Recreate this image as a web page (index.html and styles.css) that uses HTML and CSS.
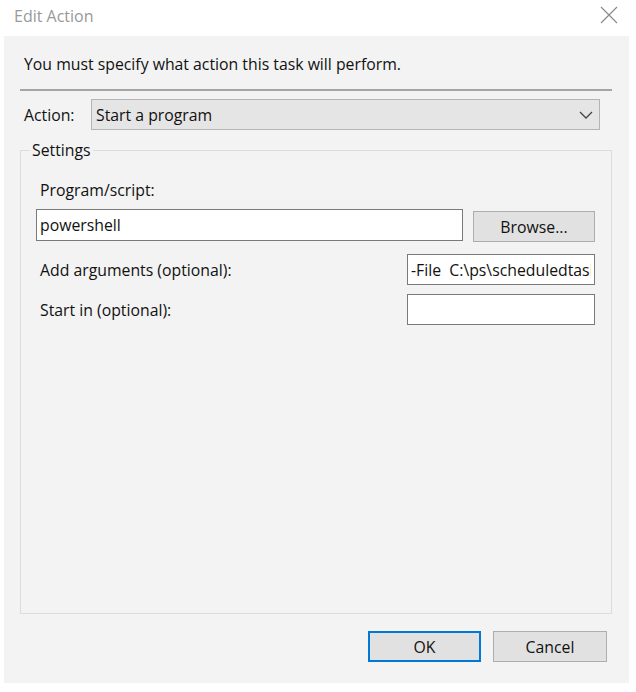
FILE: index.html
```html
<!DOCTYPE html>
<html>
<head>
<meta charset="utf-8">
<link rel="stylesheet" href="styles.css">
</head>
<body>
<div class="window">
  <div class="titlebar">
    <span class="title">Edit Action</span>
    <svg class="close" width="18" height="18" viewBox="0 0 18 18"><path d="M1 1 L17 17 M17 1 L1 17" stroke="#8a8a8a" stroke-width="1.2" fill="none"/></svg>
  </div>
  <div class="body">
    <div class="intro">You must specify what action this task will perform.</div>
    <div class="sep"></div>
    <div class="action-row">
      <span class="lbl">Action:</span>
      <div class="select"><span>Start a program</span>
        <svg width="14" height="8" viewBox="0 0 14 8"><path d="M1 1 L7 7 L13 1" stroke="#444" stroke-width="1.3" fill="none"/></svg>
      </div>
    </div>
    <fieldset class="settings">
      <legend>Settings</legend>
      <div class="lbl prog-lbl">Program/script:</div>
      <div class="prog-row">
        <div class="input wide">powershell</div>
        <div class="btn browse">Browse...</div>
      </div>
      <div class="field-row args">
        <span class="lbl">Add arguments (optional):</span>
        <div class="input small"><span class="clip">-File&nbsp; C:\ps\scheduledtasks.ps1</span></div>
      </div>
      <div class="field-row start">
        <span class="lbl">Start in (optional):</span>
        <div class="input small"></div>
      </div>
    </fieldset>
    <div class="buttons">
      <div class="btn ok">OK</div>
      <div class="btn cancel">Cancel</div>
    </div>
  </div>
</div>
</body>
</html>
```
FILE: styles.css
```css
html, body { margin: 0; padding: 0; background: #fff; }
body { width: 636px; height: 692px; overflow: hidden; font-family: "Open Sans", "Noto Sans", sans-serif; font-size: 15.8px; color: #111; }
.window { width: 636px; height: 692px; display: flex; flex-direction: column; }
.titlebar { height: 36px; display: flex; align-items: center; justify-content: space-between; padding: 0 18px 0 14px; box-sizing: border-box; }
.title { color: #999; font-size: 16px; position: relative; top: -2px; }
.close { position: relative; top: -3px; }
.body { margin: 0 7px 9px 4px; background: #f3f3f3; flex: 1; display: flex; flex-direction: column; padding: 0 0 0 16px; }
.intro { margin: 16px 0 0 4px; height: 24px; line-height: 24px; }
.sep { margin: 13px 17px 0 0; height: 2px; background: #a5a5a5; }
.action-row { display: flex; align-items: center; margin-top: 8px; height: 31px; }
.action-row .lbl { width: 71px; padding-left: 4px; box-sizing: border-box; }
.select { width: 509px; height: 31px; box-sizing: border-box; background: #e5e5e5; border: 1px solid #b4b4b4; display: flex; align-items: center; justify-content: space-between; padding: 0 6px 0 4px; }
.settings { margin: 11px 17px 0 0; height: 473px; box-sizing: border-box; border: 1px solid #dcdcdc; padding: 0 0 0 15px; }
.settings legend { padding: 0 2px; margin-left: -6px; line-height: 18px; }
.prog-lbl { margin: 20px 0 0 4px; height: 22px; line-height: 22px; }
.prog-row { display: flex; align-items: flex-start; margin-top: 8px; }
.input { background: #fff; border: 1px solid #7a7a7a; box-sizing: border-box; white-space: nowrap; overflow: hidden; padding: 0 3px; display: flex; align-items: center; }
.clip { display: block; overflow: hidden; width: 100%; }
.wide { width: 427px; height: 32px; }
.btn { background: #e1e1e1; border: 1px solid #adadad; box-sizing: border-box; display: flex; align-items: center; justify-content: center; }
.browse { width: 122px; height: 31px; margin: 2px 0 0 10px; }
.field-row { display: flex; align-items: center; justify-content: space-between; width: 559px; }
.field-row .lbl { padding-left: 4px; }
.args { margin-top: 12px; }
.start { margin-top: 9px; }
.small { width: 188px; height: 31px; }
.buttons { display: flex; justify-content: flex-end; gap: 12px; margin: 17px 22px 0 0; }
.ok { width: 113px; height: 31px; border: 2px solid #0078d7; }
.cancel { width: 114px; height: 31px; }
```
